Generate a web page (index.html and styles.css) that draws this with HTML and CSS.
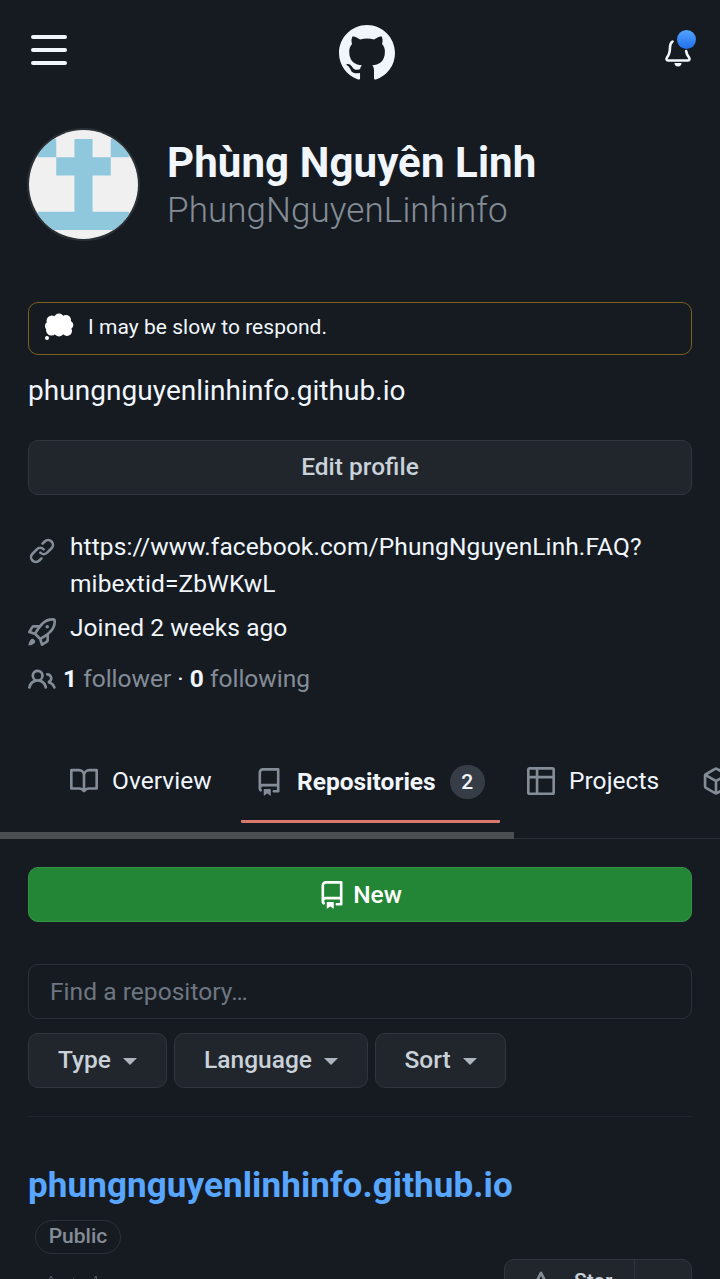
FILE: index.html
```html
<!DOCTYPE html>
<html lang="en">
<head>
<meta charset="utf-8">
<title>PhungNguyenLinhinfo / Repositories</title>
<link rel="stylesheet" href="styles.css">
</head>
<body>
<svg class="sprite" aria-hidden="true">
  <symbol id="repo" viewBox="0 0 16 16"><path fill-rule="evenodd" d="M2 2.5A2.5 2.5 0 014.5 0h8.75a.75.75 0 01.75.75v12.5a.75.75 0 01-.75.75h-2.5a.75.75 0 110-1.5h1.75v-2h-8a1 1 0 00-.714 1.7.75.75 0 01-1.072 1.05A2.495 2.495 0 012 11.5v-9zm10.500-1V9h-8c-.356 0-.694.074-1 .208V2.500a1 1 0 011-1h8zM5 12.250v3.250a.25.25 0 00.4.2l1.450-1.087a.25.25 0 01.3 0L8.600 15.700a.25.25 0 00.4-.2v-3.250a.25.25 0 00-.25-.25h-3.500a.25.25 0 00-.25.25z"/></symbol>
</svg>
<div class="page">
  <header class="topbar">
    <button class="menu" aria-label="Menu"><i></i><i></i><i></i></button>
    <svg class="logo" viewBox="0 0 16 16"><path d="M8 0C3.58 0 0 3.58 0 8c0 3.54 2.29 6.53 5.47 7.59.4.07.55-.17.55-.38 0-.19-.01-.82-.01-1.49-2.01.37-2.53-.49-2.69-.94-.09-.23-.48-.94-.82-1.13-.28-.15-.68-.52-.01-.53.63-.01 1.08.58 1.23.82.72 1.21 1.87.87 2.33.66.07-.52.28-.87.51-1.07-1.78-.2-3.64-.89-3.64-3.95 0-.87.31-1.59.82-2.15-.08-.2-.36-1.02.08-2.12 0 0 .67-.21 2.2.82.64-.18 1.32-.27 2-.27s1.36.09 2 .27c1.53-1.04 2.2-.82 2.2-.82.44 1.1.16 1.92.08 2.12.51.56.82 1.27.82 2.15 0 3.07-1.87 3.75-3.65 3.95.29.25.54.73.54 1.48 0 1.07-.01 1.93-.01 2.2 0 .21.15.46.55.38A8.013 8.013 0 0016 8c0-4.42-3.58-8-8-8z"/></svg>
    <div class="bell">
      <svg viewBox="0 0 28 32"><path d="M8.500 5.500C6.500 7 6 9 6 11.500c0 5-.7 7-3 10-1 1.500-.5 3 1 3h20c1.500 0 2-1.500 1-3-1.800-2.500-2.600-4-2.900-6.500" fill="none" stroke="#f0f6fc" stroke-width="2.600" stroke-linecap="round"/><path d="M10.500 27h7a3.500 3.500 0 01-7 0z" fill="#f0f6fc"/></svg>
      <span class="dot"></span>
    </div>
  </header>

  <section class="identity">
    <svg class="avatar" viewBox="0 0 420 420"><path fill="#f0f0f0" d="M0 0h420v420H0z"/><path fill="#8fc7dc" d="M35 35h70v70H35zM315 35h70v70h-70zM175 35h70v70h70v70h-70v140h140v70H35v-70h140V175h-70v-70h70z"/></svg>
    <div class="names">
      <h1><span class="fullname">Phùng Nguyên Linh</span></h1>
      <p><span class="login">PhungNguyenLinhinfo</span></p>
    </div>
  </section>

  <div class="status">
    <svg class="thought" viewBox="0 0 30 28"><g fill="#fff"><circle cx="8" cy="8" r="5.500"/><circle cx="15" cy="5.500" r="5"/><circle cx="22" cy="7" r="5"/><circle cx="25" cy="12" r="4.300"/><circle cx="23" cy="18" r="5"/><circle cx="15" cy="18.500" r="5"/><circle cx="7.500" cy="17" r="5.500"/><circle cx="5" cy="13" r="4"/><path d="M6 6h18v13H6z"/><circle cx="3" cy="25" r="2"/></g></svg>
    <span class="status-text">I may be slow to respond.</span>
  </div>
  <p class="bio"><span>phungnguyenlinhinfo.github.io</span></p>
  <button class="btn edit">Edit profile</button>

  <ul class="details">
    <li class="link"><svg class="icon" viewBox="0 0 16 16"><path d="M7.775 3.275a.75.75 0 001.06 1.06l1.25-1.25a2 2 0 112.83 2.83l-2.5 2.5a2 2 0 01-2.83 0 .75.75 0 00-1.06 1.06 3.5 3.5 0 004.95 0l2.5-2.5a3.5 3.5 0 00-4.95-4.95l-1.25 1.25zm-4.69 9.64a2 2 0 010-2.83l2.5-2.5a2 2 0 012.83 0 .75.75 0 001.06-1.06 3.5 3.5 0 00-4.95 0l-2.5 2.5a3.5 3.5 0 004.95 4.95l1.25-1.25a.75.75 0 00-1.06-1.06l-1.25 1.25a2 2 0 01-2.83 0z"/></svg><span>https://www.facebook.com/PhungNguyenLinh.FAQ?<br>mibextid=ZbWKwL</span></li>
    <li class="joined"><svg class="icon" viewBox="0 0 16 16"><path fill-rule="evenodd" d="M14.064 0a8.75 8.75 0 00-6.187 2.563l-.459.458c-.314.314-.616.641-.904.979H3.31a1.75 1.75 0 00-1.49.833L.11 7.607a.75.75 0 00.418 1.11l3.102.954c.037.051.079.1.124.145l2.429 2.428c.046.046.094.088.145.125l.954 3.102a.75.75 0 001.11.418l2.774-1.707a1.75 1.75 0 00.833-1.49V9.485c.338-.288.665-.59.979-.904l.458-.459A8.75 8.75 0 0016 1.936V1.75A1.75 1.75 0 0014.25 0h-.186zM10.5 10.625c-.088.06-.177.118-.266.175l-2.35 1.521.548 1.783 1.949-1.2a.25.25 0 00.119-.213v-2.066zM3.678 8.116L5.2 5.766c.058-.09.117-.178.176-.266H3.309a.25.25 0 00-.213.119l-1.2 1.95 1.782.547zm5.26-4.493A7.25 7.25 0 0114.063 1.5h.186a.25.25 0 01.25.25v.186a7.25 7.25 0 01-2.123 5.127l-.459.458a15.21 15.21 0 01-2.499 2.02l-2.317 1.5-2.143-2.143 1.5-2.317a15.25 15.25 0 012.02-2.5l.458-.458h.002zM12 5a1 1 0 11-2 0 1 1 0 012 0zm-8.44 9.56a1.5 1.5 0 10-2.12-2.12c-.734.73-1.047 2.332-1.15 3.003a.23.23 0 00.265.265c.671-.103 2.273-.416 3.005-1.148z"/></svg><span>Joined 2 weeks ago</span></li>
    <li class="follow"><svg class="icon" viewBox="0 0 16 16"><path fill-rule="evenodd" d="M5.500 3.500a2 2 0 100 4 2 2 0 000-4zM2 5.500a3.500 3.500 0 115.898 2.549 5.507 5.507 0 013.034 4.084.75.75 0 11-1.482.235 4.001 4.001 0 00-7.900 0 .75.75 0 01-1.482-.236A5.507 5.507 0 013.102 8.050 3.490 3.490 0 012 5.500zM11 4a.75.75 0 100 1.500 1.500 1.500 0 01.666 2.844.75.75 0 00-.416.672v.352a.75.75 0 00.574.73c1.200.289 2.162 1.200 2.522 2.372a.75.75 0 101.434-.44 5.010 5.010 0 00-2.560-3.012A3 3 0 0011 4z"/></svg><span><b>1</b> <em>follower</em> · <b>0</b> <em>following</em></span></li>
  </ul>

  <nav class="tabs">
    <a class="tab overview"><svg class="icon" viewBox="0 0 16 16"><path fill-rule="evenodd" d="M0 1.75A.75.75 0 01.75 1h4.253c1.227 0 2.317.59 3 1.501A3.744 3.744 0 0111.006 1h4.245a.75.75 0 01.75.75v10.5a.75.75 0 01-.75.75h-4.507a2.25 2.25 0 00-1.591.659l-.622.621a.75.75 0 01-1.06 0l-.622-.621A2.25 2.25 0 005.258 13H.75a.75.75 0 01-.75-.75V1.75zm8.755 3a2.25 2.25 0 012.25-2.25H14.5v9h-3.757c-.71 0-1.4.201-1.992.572l.004-7.322zm-1.504 7.324l.004-5.073-.002-2.253A2.25 2.25 0 005.003 2.5H1.5v9h3.757a3.75 3.75 0 011.994.574z"/></svg><span>Overview</span></a>
    <a class="tab current"><svg class="icon"><use href="#repo"/></svg><strong>Repositories</strong><span class="count">2</span></a>
    <a class="tab projects"><svg class="icon" viewBox="0 0 16 16"><path d="M1.500.75h13a.75.75 0 01.75.75v13a.75.75 0 01-.75.75h-13a.75.75 0 01-.75-.75v-13a.75.75 0 01.75-.75zM.75 5.750h14.500M5.750.75v14.500" fill="none" stroke="#848d97" stroke-width="1.500"/></svg><span>Projects</span></a>
    <a class="tab packages"><svg class="icon" viewBox="0 0 16 16"><path fill-rule="evenodd" d="M8.878.392a1.75 1.75 0 00-1.756 0l-5.25 3.045A1.75 1.75 0 001 4.951v6.098c0 .624.332 1.2.872 1.514l5.25 3.045a1.75 1.75 0 001.756 0l5.25-3.045c.54-.313.872-.89.872-1.514V4.951c0-.624-.332-1.2-.872-1.514L8.878.392zM7.875 1.69a.25.25 0 01.25 0l4.63 2.685L8 7.133 3.245 4.375l4.63-2.685zM2.5 5.677v5.372c0 .09.047.171.125.216l4.625 2.683V8.432L2.5 5.677zm6.25 8.271l4.625-2.683a.25.25 0 00.125-.216V5.677L8.75 8.432v5.516z"/></svg></a>
  </nav>
  <div class="scrollbar"><i></i></div>

  <main>
    <button class="btn new"><svg class="icon"><use href="#repo"/></svg>New</button>
    <div class="search"><span>Find a repository…</span></div>
    <div class="filters">
      <button class="btn type">Type<i class="caret"></i></button>
      <button class="btn language">Language<i class="caret"></i></button>
      <button class="btn sort">Sort<i class="caret"></i></button>
    </div>
    <article class="repo">
      <h2><span>phungnguyenlinhinfo.github.io</span></h2>
      <div class="public">Public</div>
      <div class="repo-foot">
        <svg class="marks" viewBox="0 0 50 4"><path d="M1 4l2-4 2 4M24 4l1.500-1.500L27 4M46 4l2-4 1 4" fill="none" stroke="#59606a"/></svg>
        <div class="star">
          <div class="star-main"><svg class="icon" viewBox="0 0 16 16"><path fill-rule="evenodd" d="M8 .25a.75.75 0 01.673.418l1.882 3.815 4.21.612a.75.75 0 01.416 1.279l-3.046 2.97.719 4.192a.75.75 0 01-1.088.791L8 12.347l-3.766 1.98a.75.75 0 01-1.088-.79l.72-4.194L.818 6.374a.75.75 0 01.416-1.28l4.21-.611L7.327.668A.75.75 0 018 .25zm0 2.445L6.615 5.5a.75.75 0 01-.564.41l-3.097.45 2.24 2.184a.75.75 0 01.216.664l-.528 3.084 2.769-1.456a.75.75 0 01.698 0l2.77 1.456-.53-3.084a.75.75 0 01.216-.664l2.24-2.183-3.096-.45a.75.75 0 01-.564-.41L8 2.694v.001z"/></svg><span>Star</span></div>
          <div class="star-more"></div>
        </div>
      </div>
    </article>
  </main>
</div>
</body>
</html>
```
FILE: styles.css
```css
* { box-sizing: border-box; }
html, body { margin: 0; height: 1279px; overflow: hidden; background: #161b22; }
body { font: 24.500px/36px Roboto, sans-serif; color: #f0f6fc; }
.sprite { display: none; }
h1, h2, p, ul { margin: 0; padding: 0; list-style: none; }
svg { display: block; flex: none; }
button { font: inherit; border: 0; padding: 0; background: none; color: inherit; }
.page { width: 720px; height: 1279px; overflow: hidden; }
.icon { width: 28px; height: 28px; fill: #848d97; }

.topbar { height: 128px; padding: 24px 24px 0 31px; display: flex; justify-content: space-between; align-items: flex-start; }
.menu { width: 36px; margin-top: 11px; display: grid; gap: 9.500px; }
.menu i { height: 3.700px; border-radius: 2px; background: #f0f6fc; }
.logo { width: 56px; height: 56px; fill: #f0f6fc; margin: .5px 0 0 1px; }
.bell { position: relative; width: 31px; height: 36px; margin-top: 11px; }
.bell svg { width: 28px; height: 32px; margin: 1px 0 0 -1px; }
.dot { position: absolute; right: 0; top: -5.500px; width: 19px; height: 19px; border-radius: 50%; background: linear-gradient(#54a3ff, #1f6feb); }

.identity { height: 174px; padding-left: 27px; display: flex; gap: 27px; }
.avatar { width: 113px; height: 113px; border-radius: 50%; border: 2px solid #2b3037; }
.names { padding-top: 9px; }
h1 { font-size: 42px; line-height: 51px; font-weight: 700; letter-spacing: .1px; }
.names p { font-size: 35px; line-height: 46px; font-weight: 300; color: #848d97; letter-spacing: .08px; }

.status { height: 53px; margin: 0 28px; border: 1px solid #7d601b; border-radius: 10px; padding: 0 0 3px 15px; display: flex; align-items: center; gap: 14px; font-size: 21px; letter-spacing: .03px; }
.thought { width: 30px; height: 28px; }
.bio { margin: 17px 28px 0; font-size: 28px; line-height: 38px; height: 68px; letter-spacing: .05px; }

.btn { height: 55px; border: 1px solid #31363e; border-radius: 10px; background: #21262d; color: #c9d1d9; font-weight: 500; font-size: 24.500px; display: flex; align-items: center; justify-content: center; }
.edit { width: 664px; margin: 0 28px; padding-bottom: 1px; }

.details { padding: 33px 28px 0; height: 249px; }
.details li { display: flex; gap: 14px; }
.link { height: 81px; line-height: 37px; letter-spacing: .1px; }
.link .icon, .joined .icon { margin-top: 9px; }
.joined { height: 52px; line-height: 37px; letter-spacing: .06px; }
.details .follow { gap: 7px; line-height: 36px; }
.follow .icon { margin-top: 5px; }
.follow em { font-style: normal; color: #848d97; }

.tabs { height: 88px; padding-left: 70px; display: flex; align-items: flex-start; overflow: hidden; }
.tab { height: 79px; display: flex; align-items: center; padding-bottom: 5px; flex: none; letter-spacing: .05px; }
.overview { width: 171px; gap: 14px; }
.current { width: 259px; padding-left: 14px; gap: 14px; border-bottom: 3.500px solid #d8796b; padding-bottom: 1px; border-radius: 1px; letter-spacing: 0; }
.count { width: 35px; height: 34px; border-radius: 17px; background: #373d47; font-size: 21px; line-height: 34px; text-align: center; font-weight: 500; }
.projects { padding-left: 27px; gap: 14px; width: 202px; }
.scrollbar { height: 7px; border-bottom: 1px solid #282e35; }
.scrollbar i { display: block; width: 514px; height: 7px; background: #4b4e51; }

main { padding: 28px 28px 0; }
.new { width: 664px; background: #238636; border-color: #349545; color: #fff; gap: 7px; }
.new .icon { fill: #fff; }
.search { margin-top: 42px; height: 55px; border: 1px solid #2b3139; border-radius: 10px; padding: 0 21px; line-height: 53px; color: #6e7681; letter-spacing: .05px; }
.filters { display: flex; gap: 7px; padding: 14px 0 28px; border-bottom: 1px solid #20262d; }
.filters .btn { gap: 12px; padding-bottom: 1px; }
.caret { border: 7px solid transparent; border-top-color: #b0b6bf; border-bottom: 0; margin-top: 3px; }
.type { width: 139px; }
.language { width: 194px; }
.sort { width: 131px; }
.repo { padding-top: 47px; }
h2 { font-size: 35px; line-height: 44px; font-weight: 700; color: #58a6ff; letter-spacing: .1px; }
.public { width: 86px; height: 34px; margin: 12px 0 0 7px; border: 1px solid #2b3139; border-radius: 17px; font-size: 21px; line-height: 31px; text-align: center; color: #848d97; font-weight: 500; }
.repo-foot { display: flex; justify-content: space-between; padding: 5px 0 0 20px; }
.marks { width: 50px; height: 4px; margin-top: 17px; }
.star { width: 188px; height: 49px; display: flex; border: 1px solid #31363e; border-radius: 10px; background: #21262d; font-weight: 500; font-size: 21px; color: #c9d1d9; }
.star-main { width: 130px; display: flex; padding: 0 0 0 22px; gap: 19px; border-right: 1px solid #31363e; }
.star .icon { margin-top: 11px; }
.star-main span { line-height: 42px; }
```
